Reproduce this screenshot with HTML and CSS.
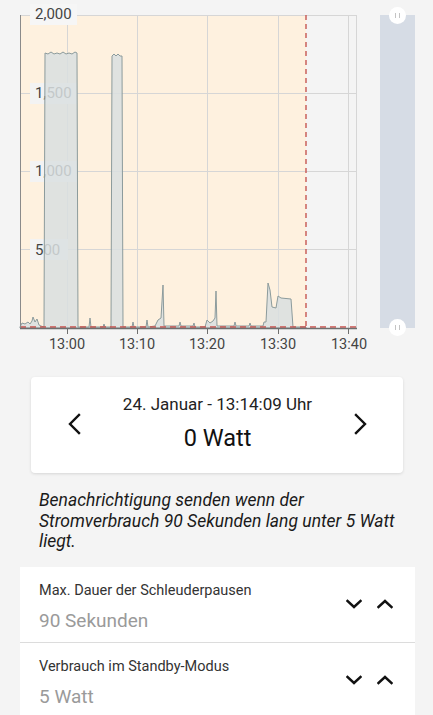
FILE: index.html
```html
<!DOCTYPE html>
<html>
<head>
	<meta charset="utf-8">
	<title>Waschmaschine</title>
	<link rel="stylesheet" href="styles.css">
</head>
<body>
	<div class="chart">
		<svg class="plot" width="370" height="360" viewBox="0 0 370 360">
			<rect x="20" y="15" width="286" height="313" fill="#fef1df"/>
			<g stroke="#d6d6d6" stroke-width="1">
				<line x1="20" y1="15.5" x2="357" y2="15.5"/>
				<line x1="20" y1="93.5" x2="357" y2="93.5"/>
				<line x1="20" y1="171.5" x2="357" y2="171.5"/>
				<line x1="20" y1="249.5" x2="357" y2="249.5"/>
				<line x1="67.5" y1="15" x2="67.5" y2="328"/>
				<line x1="137.5" y1="15" x2="137.5" y2="328"/>
				<line x1="207.5" y1="15" x2="207.5" y2="328"/>
				<line x1="278.5" y1="15" x2="278.5" y2="328"/>
				<line x1="348.5" y1="15" x2="348.5" y2="328"/>
				<line x1="356.5" y1="15" x2="356.5" y2="328"/>
			</g>
			<g class="ylabels">
				<rect x="30" y="4" width="47" height="21" fill="#f6f6f6"/>
				<rect x="30" y="83" width="47" height="21" fill="#f3f3f3"/>
				<rect x="30" y="161" width="47" height="21" fill="#f3f3f3"/>
				<rect x="30" y="239" width="38" height="21" fill="#f3f3f3"/>
				<text x="35" y="19">2,000</text>
				<text x="35" y="98">1,500</text>
				<text x="35" y="176">1,000</text>
				<text x="35" y="255">500</text>
			</g>
			<path class="series" d="M20,327 L22,323 L25,324 L28,322 L30,324 L32,321 L33,317 L35,322 L37,319 L39,325 L41,326 L44,327 L45,53 L48,54 L51,52 L54,54 L57,53 L60,54 L63,52 L66,54 L69,53 L72,54 L75,52 L77,53 L78,327 L89,327 L90,318 L91,327 L103,327 L104,324 L105,327 L111,327 L112,56 L114,54 L116,56 L118,54 L120,56 L122,56 L123,327 L132,327 L133,322 L134,327 L146,327 L147,320 L148,327 L155,326 L158,320 L161,318 L163,285 L164,326 L179,326 L180,322 L181,326 L193,326 L194,323 L195,327 L205,327 L207,320 L210,323 L213,321 L215,318 L216,291 L217,326 L234,326 L235,322 L236,326 L249,326 L250,323 L251,326 L263,326 L264,322 L266,322 L268,283 L270,290 L272,307 L276,308 L278,296 L281,298 L291,299 L293,327 L306,327 L306,328 L20,328 Z"/>
			<line x1="20" y1="327" x2="357" y2="327" stroke="#c9524e" stroke-width="1.5" stroke-dasharray="6 4"/>
			<line x1="306" y1="15" x2="306" y2="328" stroke="#c9605c" stroke-width="1.5" stroke-dasharray="5 4"/>
			<line x1="20.5" y1="15" x2="20.5" y2="329" stroke="#8a8a8a" stroke-width="1"/>
			<line x1="20" y1="328.5" x2="357" y2="328.5" stroke="#6f6f6f" stroke-width="1.5"/>
			<g stroke="#6f6f6f" stroke-width="1">
				<line x1="67.5" y1="328" x2="67.5" y2="334"/>
				<line x1="137.5" y1="328" x2="137.5" y2="334"/>
				<line x1="207.5" y1="328" x2="207.5" y2="334"/>
				<line x1="278.5" y1="328" x2="278.5" y2="334"/>
				<line x1="348.5" y1="328" x2="348.5" y2="334"/>
			</g>
			<g class="xlabels">
				<text x="67" y="349">13:00</text>
				<text x="137" y="349">13:10</text>
				<text x="207" y="349">13:20</text>
				<text x="278" y="349">13:30</text>
				<text x="349" y="349">13:40</text>
			</g>
		</svg>
		<div class="navigator">
			<span class="handle handle-top"></span>
			<span class="handle handle-bottom"></span>
		</div>
	</div>

	<div class="current">
		<svg class="arrow" width="14" height="22" viewBox="0 0 14 22">
			<polyline points="12,2 3,11 12,20"/>
		</svg>
		<div class="current-text">
			<div class="current-date">24. Januar - 13:14:09 Uhr</div>
			<div class="current-value">0 Watt</div>
		</div>
		<svg class="arrow" width="14" height="22" viewBox="0 0 14 22">
			<polyline points="2,2 11,11 2,20"/>
		</svg>
	</div>

	<p class="hint">Benachrichtigung senden wenn der Stromverbrauch 90 Sekunden lang unter 5 Watt liegt.</p>

	<div class="settings">
		<div class="row">
			<div class="row-text">
				<div class="row-label">Max. Dauer der Schleuderpausen</div>
				<div class="row-value">90 Sekunden</div>
			</div>
			<div class="row-buttons">
				<svg class="step" width="16" height="10" viewBox="0 0 16 10"><polyline points="1.5,2 8,8 14.5,2"/></svg>
				<svg class="step" width="16" height="10" viewBox="0 0 16 10"><polyline points="1.5,8 8,2 14.5,8"/></svg>
			</div>
		</div>
		<div class="row">
			<div class="row-text">
				<div class="row-label">Verbrauch im Standby-Modus</div>
				<div class="row-value">5 Watt</div>
			</div>
			<div class="row-buttons">
				<svg class="step" width="16" height="10" viewBox="0 0 16 10"><polyline points="1.5,2 8,8 14.5,2"/></svg>
				<svg class="step" width="16" height="10" viewBox="0 0 16 10"><polyline points="1.5,8 8,2 14.5,8"/></svg>
			</div>
		</div>
	</div>
</body>
</html>
```

FILE: styles.css
```css
body{
	margin:0;
	background-color:#f4f4f4;
	font-family:Roboto, "Noto Sans", sans-serif;
	color:#222;
}
.chart{
	display:flex;
	align-items:flex-start;
	height:360px;
}
.plot{
	display:block;
	flex:none;
}
.ylabels text,
.xlabels text{
	font-family:Roboto, sans-serif;
	font-size:15px;
	fill:#444;
}
.xlabels text{
	font-size:14.5px;
	text-anchor:middle;
}
.series{
	fill:#d9dfe0;
	fill-opacity:0.85;
	stroke:#8c9b9c;
	stroke-width:1;
	stroke-linejoin:round;
}
.navigator{
	position:relative;
	margin:15px 0 0 10px;
	width:35px;
	height:313px;
	background-color:#d6dce5;
}
.handle{
	position:absolute;
	left:9px;
	width:17px;
	height:17px;
	border-radius:50%;
	background-color:#fff;
}
.handle::before{
	content:"";
	position:absolute;
	left:6px;
	top:6px;
	width:3px;
	height:5px;
	border-left:1px solid #c4c4c4;
	border-right:1px solid #c4c4c4;
}
.handle-top{
	top:-8px;
}
.handle-bottom{
	bottom:-8px;
}
.current{
	display:flex;
	align-items:center;
	margin:17px 30px 0 31px;
	padding:17px 35px 21px 36px;
	background-color:#fff;
	border-radius:4px;
	box-shadow:0 1px 3px rgba(0,0,0,0.12);
}
.arrow{
	flex:none;
	margin-top:2px;
}
.arrow polyline,
.step polyline{
	fill:none;
	stroke:#111;
	stroke-width:2.4;
	stroke-linecap:square;
}
.current-text{
	flex:1;
	text-align:center;
}
.current-date{
	font-size:17px;
	line-height:20px;
	color:#222;
}
.current-value{
	margin-top:10px;
	font-size:23.5px;
	line-height:28px;
	color:#111;
}
.hint{
	margin:17px 30px 0 39px;
	font-size:17.5px;
	line-height:20.5px;
	font-style:italic;
	color:#1a1a1a;
}
.settings{
	margin:15px 18px 0 20px;
	background-color:#fff;
}
.row{
	display:flex;
	align-items:center;
	padding:14px 22px 9px 19px;
	border-bottom:1px solid #dcdcdc;
}
.row-text{
	flex:1;
}
.row-label{
	font-size:14.5px;
	line-height:20px;
	color:#333;
}
.row-value{
	margin-top:8px;
	font-size:19px;
	line-height:24px;
	color:#9a9a9a;
}
.row-buttons{
	display:flex;
	gap:15px;
	margin-bottom:6px;
}
```
